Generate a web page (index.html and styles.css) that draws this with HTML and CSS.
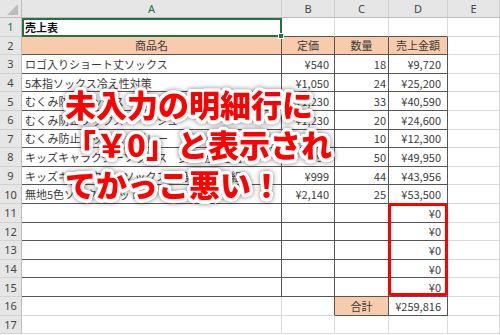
FILE: index.html
```html
<!DOCTYPE html>
<html lang="ja">
<head>
<meta charset="utf-8">
<title>売上表</title>
<link rel="stylesheet" href="styles.css">
</head>
<body>
<div class="sheet">
  <div class="grid">
    <div class="corner"><span class="tri"></span></div>
    <div class="ch act">A</div><div class="ch">B</div><div class="ch">C</div><div class="ch">D</div><div class="ch">E</div>

    <div class="rh act">1</div>
    <div class="c sel top b">売上表</div><div class="c top"></div><div class="c top"></div><div class="c top"></div><div class="c"></div>

    <div class="rh">2</div>
    <div class="c t h ctr">商品名</div><div class="c t h ctr">定価</div><div class="c t h ctr">数量</div><div class="c t h ctr">売上金額</div><div class="c"></div>

    <div class="rh">3</div>
    <div class="c t">ロゴ入りショート丈ソックス</div><div class="c t r pb">¥540</div><div class="c t r pc">18</div><div class="c t r pd">¥9,720</div><div class="c"></div>

    <div class="rh">4</div>
    <div class="c t">5本指ソックス冷え性対策</div><div class="c t r pb">¥1,050</div><div class="c t r pc">24</div><div class="c t r pd">¥25,200</div><div class="c"></div>

    <div class="rh">5</div>
    <div class="c t">むくみ防止ソックス　ブラック</div><div class="c t r pb">¥1,230</div><div class="c t r pc">33</div><div class="c t r pd">¥40,590</div><div class="c"></div>

    <div class="rh">6</div>
    <div class="c t">むくみ防止ソックス　ベージュ</div><div class="c t r pb">¥1,230</div><div class="c t r pc">20</div><div class="c t r pd">¥24,600</div><div class="c"></div>

    <div class="rh">7</div>
    <div class="c t">むくみ防止ソックス　グレー</div><div class="c t r pb">¥1,230</div><div class="c t r pc">10</div><div class="c t r pd">¥12,300</div><div class="c"></div>

    <div class="rh">8</div>
    <div class="c t">キッズキャラクターソックス　女児用 3足組</div><div class="c t r pb">¥999</div><div class="c t r pc">50</div><div class="c t r pd">¥49,950</div><div class="c"></div>

    <div class="rh">9</div>
    <div class="c t">キッズキャラクターソックス　男児用 3足組</div><div class="c t r pb">¥999</div><div class="c t r pc">44</div><div class="c t r pd">¥43,956</div><div class="c"></div>

    <div class="rh">10</div>
    <div class="c t">無地5色ソックスセット</div><div class="c t r pb">¥2,140</div><div class="c t r pc">25</div><div class="c t r pd">¥53,500</div><div class="c"></div>

    <div class="rh">11</div>
    <div class="c t"></div><div class="c t"></div><div class="c t"></div><div class="c t r pd">¥0</div><div class="c"></div>

    <div class="rh">12</div>
    <div class="c t"></div><div class="c t"></div><div class="c t"></div><div class="c t r pd">¥0</div><div class="c"></div>

    <div class="rh">13</div>
    <div class="c t"></div><div class="c t"></div><div class="c t"></div><div class="c t r pd">¥0</div><div class="c"></div>

    <div class="rh">14</div>
    <div class="c t"></div><div class="c t"></div><div class="c t"></div><div class="c t r pd">¥0</div><div class="c"></div>

    <div class="rh">15</div>
    <div class="c t"></div><div class="c t"></div><div class="c t"></div><div class="c t r pd">¥0</div><div class="c"></div>

    <div class="rh">16</div>
    <div class="c"></div><div class="c rb"></div><div class="c t h ctr">合計</div><div class="c t r pd">¥259,816</div><div class="c"></div>

    <div class="rh">17</div>
    <div class="c"></div><div class="c"></div><div class="c"></div><div class="c"></div><div class="c"></div>
  </div>

  <div class="redbox"></div>

  <div class="callout">
    <div class="line">未入力の明細行に</div>
    <div class="line">「￥0」と表示され</div>
    <div class="line">てかっこ悪い！</div>
  </div>
</div>
</body>
</html>
```

FILE: styles.css
```css
html, body {
  margin: 0;
  padding: 0;
  background: #ffffff;
}

.sheet {
  position: relative;
  width: 500px;
  height: 335px;
  overflow: hidden;
  font-family: "Noto Sans CJK JP", "Noto Sans", sans-serif;
}

.grid {
  display: grid;
  grid-template-columns: 22px 260px 53px 54px 59px 1fr;
  grid-template-rows: 18px repeat(17, 18.6px);
}

.corner {
  position: relative;
  background: #e6e6e6;
  border-right: 1px solid #bdbdbd;
  border-bottom: 1px solid #bdbdbd;
  box-sizing: border-box;
}

.tri {
  position: absolute;
  right: 3px;
  bottom: 2px;
  width: 0;
  height: 0;
  border-left: 11px solid transparent;
  border-bottom: 11px solid #bcbcbc;
}

.ch {
  background: #e6e6e6;
  border-right: 1px solid #cfcfcf;
  border-bottom: 1px solid #bdbdbd;
  box-sizing: border-box;
  display: flex;
  align-items: center;
  justify-content: center;
  font-family: "Noto Sans", "Liberation Sans", sans-serif;
  font-size: 11px;
  color: #444;
}

.rh {
  background: #e6e6e6;
  border-right: 1px solid #bdbdbd;
  border-bottom: 1px solid #d2d2d2;
  box-sizing: border-box;
  display: flex;
  align-items: center;
  justify-content: center;
  font-family: "Noto Sans", "Liberation Sans", sans-serif;
  font-size: 11px;
  color: #444;
}

.act {
  color: #217346;
}

.c {
  border-right: 1px solid #dadada;
  border-bottom: 1px solid #dadada;
  box-sizing: border-box;
  display: flex;
  align-items: center;
  padding: 0 3px;
  font-size: 11px;
  color: #3a3a3a;
  white-space: nowrap;
  overflow: hidden;
  min-width: 0;
}

.b {
  font-weight: 700;
  color: #111;
}

.top {
  border-bottom-color: #555;
}

.t {
  border-right-color: #555;
  border-bottom-color: #555;
}

.rb {
  border-right-color: #555;
}

.h {
  background: #f8cbad;
}

.ctr {
  justify-content: center;
}

.r {
  justify-content: flex-end;
}

.pb { padding-right: 5px; }
.pc { padding-right: 2px; }
.pd { padding-right: 6px; }

.sel {
  position: relative;
  overflow: visible;
  outline: 2px solid #217346;
  outline-offset: -2px;
}

.sel::after {
  content: "";
  position: absolute;
  right: -3px;
  bottom: -3px;
  width: 4px;
  height: 4px;
  background: #217346;
  border: 1px solid #ffffff;
  z-index: 2;
}

.redbox {
  position: absolute;
  left: 388px;
  top: 202.5px;
  width: 60px;
  height: 93px;
  box-sizing: border-box;
  border: 3px solid #ff0000;
  border-radius: 3px;
}

.callout {
  position: absolute;
  left: 65px;
  top: 84px;
  font-family: "Noto Sans CJK JP", sans-serif;
  font-weight: 900;
  font-size: 31px;
  line-height: 40px;
  color: #ff0000;
  white-space: nowrap;
  filter: drop-shadow(0 0 2.5px rgba(0, 0, 0, 0.5));
  text-shadow:
    3.5px 0 0 #fff, -3.5px 0 0 #fff, 0 3.5px 0 #fff, 0 -3.5px 0 #fff,
    2.5px 2.5px 0 #fff, -2.5px 2.5px 0 #fff, 2.5px -2.5px 0 #fff, -2.5px -2.5px 0 #fff,
    3.2px 1.4px 0 #fff, -3.2px 1.4px 0 #fff, 3.2px -1.4px 0 #fff, -3.2px -1.4px 0 #fff,
    1.4px 3.2px 0 #fff, -1.4px 3.2px 0 #fff, 1.4px -3.2px 0 #fff, -1.4px -3.2px 0 #fff;
}

.line {
  height: 40px;
}
```
